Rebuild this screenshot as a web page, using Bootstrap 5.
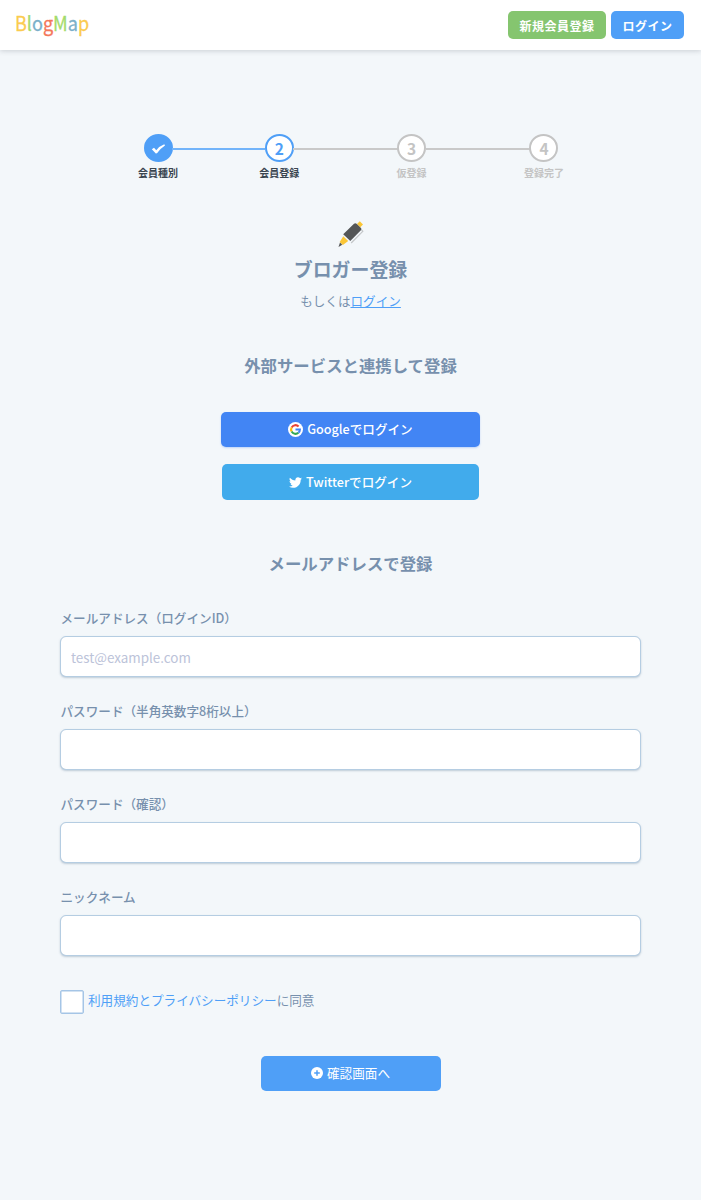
<!DOCTYPE html>
<html lang="ja">
<head>
<meta charset="utf-8">
<meta name="viewport" content="width=device-width, initial-scale=1">
<title>BlogMap</title>
<link href="https://cdn.jsdelivr.net/npm/bootstrap@5.3.0/dist/css/bootstrap.min.css" rel="stylesheet">
<style>
body{background:#f3f7fa;color:#7790ad;font-family:"Noto Sans CJK JP",sans-serif;font-size:12.6px;line-height:20px;min-height:1200px}
a{color:#4f9ff7}
.site-header{height:50px;background:#fff;box-shadow:0 1px 5px rgba(60,70,80,.22);padding:0 17px 0 15px}
.logo{font-size:19.5px;line-height:30px;margin-top:-4px;transform:scaleX(.925);transform-origin:left;-webkit-text-stroke:.3px currentColor}
.logo .y{color:#fbcb4f}.logo .g{color:#a5db6c}.logo .b{color:#7bb0ca}.logo .r{color:#f4775a}
.btn{--bs-btn-color:#fff;--bs-btn-hover-color:#fff;border:0;border-radius:5px;padding:0;display:flex;align-items:center;justify-content:center;line-height:20px;font-size:12.6px}
.btn-head{height:28px;font-size:12px;font-weight:700;letter-spacing:.5px;padding-top:1px}
.btn-join{width:98px;background:#85c56f}
.btn-login{width:73px;background:#4f9ff7}
.steps{margin:84px 0 0 138px;width:426px;height:46px}
.step{width:40px;flex:none;font-size:10px;line-height:14px;font-weight:700;color:#c4c4c4}
.dot{width:29px;height:29px;border:2px solid #c4c4c4;border-radius:50%;background:#fff;font-size:15.5px;padding-bottom:1px}
.step.on{color:#3a4550}
.step.on .dot{border-color:#4f9ff7;color:#4f9ff7}
.step.done .dot{background:#4f9ff7;padding:1px 0 0}
.bar{height:2px;background:#c9c9c9;margin:14px -6px 0}
.bar.on{background:#72b4fa}
h1{font-size:18.9px;line-height:28px;font-weight:700;margin:7px 0 0}
h2{font-size:16.4px;line-height:24px;font-weight:700}
.pen{margin-top:40px}
.btn-ext{height:36px;font-size:12.6px;font-weight:500}
.btn-google{width:259px;height:35px;background:#4285f4;box-shadow:0 1px 2px rgba(66,133,244,.3);margin-top:35px;padding-bottom:1px}
.btn-twitter{width:257px;background:#41abec;margin-top:17px}
.form-area{margin:33px 60px 0}
.form-label{display:block;font-weight:500;margin:0 0 8px;line-height:20px;padding-left:.5px}
.form-control{height:41px;border:1px solid #b5cde2;border-radius:6px;padding:0 10px;font-size:13.4px;box-shadow:0 1px 2px rgba(90,120,150,.35);color:#7790ad}
.form-control::placeholder{color:#bcc3d9}
.field{margin-bottom:24px}
.form-check-input{width:24px;height:24px;border:1.5px solid #a5c5e6;border-radius:2px!important;margin:0;box-shadow:inset 0 0 0 .5px #a5c5e6}
.btn-next{width:180px;height:35px;background:#4f9ff7;margin-top:41.500px;padding-bottom:1px}
</style>
</head>
<body>
<header class="site-header d-flex align-items-center justify-content-between">
  <div class="logo"><span class="y">B</span><span class="g">l</span><span class="b">o</span><span class="r">g</span><span class="g">M</span><span class="b">a</span><span class="y">p</span></div>
  <div class="d-flex" style="gap:5px">
    <a class="btn btn-head btn-join" href="#">新規会員登録</a>
    <a class="btn btn-head btn-login" href="#">ログイン</a>
  </div>
</header>
<main class="d-flex flex-column align-items-stretch">
  <div class="steps d-flex">
    <div class="step on done d-flex flex-column align-items-center"><div class="dot d-flex align-items-center justify-content-center"><svg width="15" height="12" viewBox="0 0 15 12"><path d="M.8 6.300 3 4.800 5.300 7.300Q8.500 3 13.300 1.300L14 2.500Q9.500 5.300 6 10.300L4.800 10.500Z" fill="#fff"/></svg></div><span class="mt-1 text-nowrap">会員種別</span></div>
    <div class="bar on flex-fill"></div>
    <div class="step on d-flex flex-column align-items-center"><div class="dot d-flex align-items-center justify-content-center">2</div><span class="mt-1 text-nowrap">会員登録</span></div>
    <div class="bar flex-fill" style="flex-grow:1.12!important"></div>
    <div class="step d-flex flex-column align-items-center"><div class="dot d-flex align-items-center justify-content-center">3</div><span class="mt-1 text-nowrap">仮登録</span></div>
    <div class="bar flex-fill" style="flex-grow:1.12!important"></div>
    <div class="step d-flex flex-column align-items-center"><div class="dot d-flex align-items-center justify-content-center">4</div><span class="mt-1 text-nowrap">登録完了</span></div>
  </div>
  <section class="d-flex flex-column align-items-center text-center">
    <svg class="pen" width="28" height="28" viewBox="0 0 28 28"><path d="M20 4 22.800 1.300 26 4.500 23.300 7.300Z" fill="#fbc636"/><path d="M24.500 10 25.800 11.300 14.200 23" fill="none" stroke="#c3c6c8" stroke-width="1.200"/><path d="M17 3.800Q18.300 2.600 19.600 3.700L24 7.900Q25.100 9.100 23.900 10.300L13.300 20.900 6.200 14.200Z" fill="#545657"/><path d="M6.300 16.300 11.200 20.900 5.900 25 2.700 22Z" fill="#fbc636"/><path d="M3 22.500 5.300 24.800 1.500 27Z" fill="#545657"/></svg>
    <h1>ブロガー登録</h1>
    <p class="mb-0" style="margin-top:8px">もしくは<a href="#">ログイン</a></p>
    <h2 style="margin:42px 0 0">外部サービスと連携して登録</h2>
    <a class="btn btn-ext btn-google" href="#"><svg class="me-1" width="15" height="15" viewBox="0 0 16 16"><circle cx="8" cy="8" r="8" fill="#fff"/><g fill="none" stroke-width="2.200"><path d="M11.300 4.700A4.700 4.700 0 0 0 3.900 5.800" stroke="#ea4335"/><path d="M3.900 5.800A4.700 4.700 0 0 0 3.900 10.200" stroke="#fbbc05"/><path d="M3.900 10.200A4.700 4.700 0 0 0 11.100 11.500" stroke="#34a853"/><path d="M11.100 11.500A4.700 4.700 0 0 0 12.700 8H8" stroke="#4285f4"/></g></svg>Googleでログイン</a>
    <a class="btn btn-ext btn-twitter" href="#"><svg class="me-1" width="13" height="13" viewBox="0 0 512 512"><path fill="#fff" d="M459.370 151.716c.325 4.548.325 9.097.325 13.645 0 138.720-105.583 298.558-298.558 298.558-59.452 0-114.680-17.219-161.137-47.106 8.447.974 16.568 1.299 25.340 1.299 49.055 0 94.213-16.568 130.274-44.832-46.132-.975-84.792-31.188-98.112-72.772 6.498.974 12.995 1.624 19.818 1.624 9.421 0 18.843-1.300 27.614-3.573-48.081-9.747-84.143-51.980-84.143-102.985v-1.299c13.969 7.797 30.214 12.670 47.431 13.319-28.264-18.843-46.781-51.005-46.781-87.391 0-19.492 5.197-37.360 14.294-52.954 51.655 63.675 129.300 105.258 216.365 109.807-1.624-7.797-2.599-15.918-2.599-24.040 0-57.828 46.782-104.934 104.934-104.934 30.213 0 57.502 12.670 76.670 33.137 23.715-4.548 46.456-13.320 66.599-25.340-7.798 24.366-24.366 44.833-46.132 57.827 21.117-2.273 41.584-8.122 60.426-16.243-14.292 20.791-32.161 39.308-52.628 54.253z"/></svg>Twitterでログイン</a>
    <h2 style="margin:51px 0 0">メールアドレスで登録</h2>
  </section>
  <form class="form-area">
    <div class="field"><label class="form-label" for="m">メールアドレス（ログインID）</label><input id="m" class="form-control" type="email" placeholder="test@example.com"></div>
    <div class="field"><label class="form-label" for="p">パスワード（半角英数字8桁以上）</label><input id="p" class="form-control" type="password"></div>
    <div class="field"><label class="form-label" for="q">パスワード（確認）</label><input id="q" class="form-control" type="password"></div>
    <div class="field"><label class="form-label" for="n">ニックネーム</label><input id="n" class="form-control" type="text"></div>
    <div class="d-flex" style="margin-top:34px"><input class="form-check-input flex-shrink-0" id="c" type="checkbox"><label for="c" class="ms-1"><a href="#" class="text-decoration-none">利用規約とプライバシーポリシー</a>に同意</label></div>
    <button type="button" class="btn btn-next mx-auto"><svg class="me-1" width="12" height="12" viewBox="0 0 12 12"><circle cx="6" cy="6" r="6" fill="#fff"/><path d="M6 3.200V8.800M3.200 6H8.800" stroke="#4f9ff7" stroke-width="1.500"/></svg>確認画面へ</button>
  </form>
</main>
<script src="https://cdn.jsdelivr.net/npm/bootstrap@5.3.0/dist/js/bootstrap.bundle.min.js"></script>
</body>
</html>
